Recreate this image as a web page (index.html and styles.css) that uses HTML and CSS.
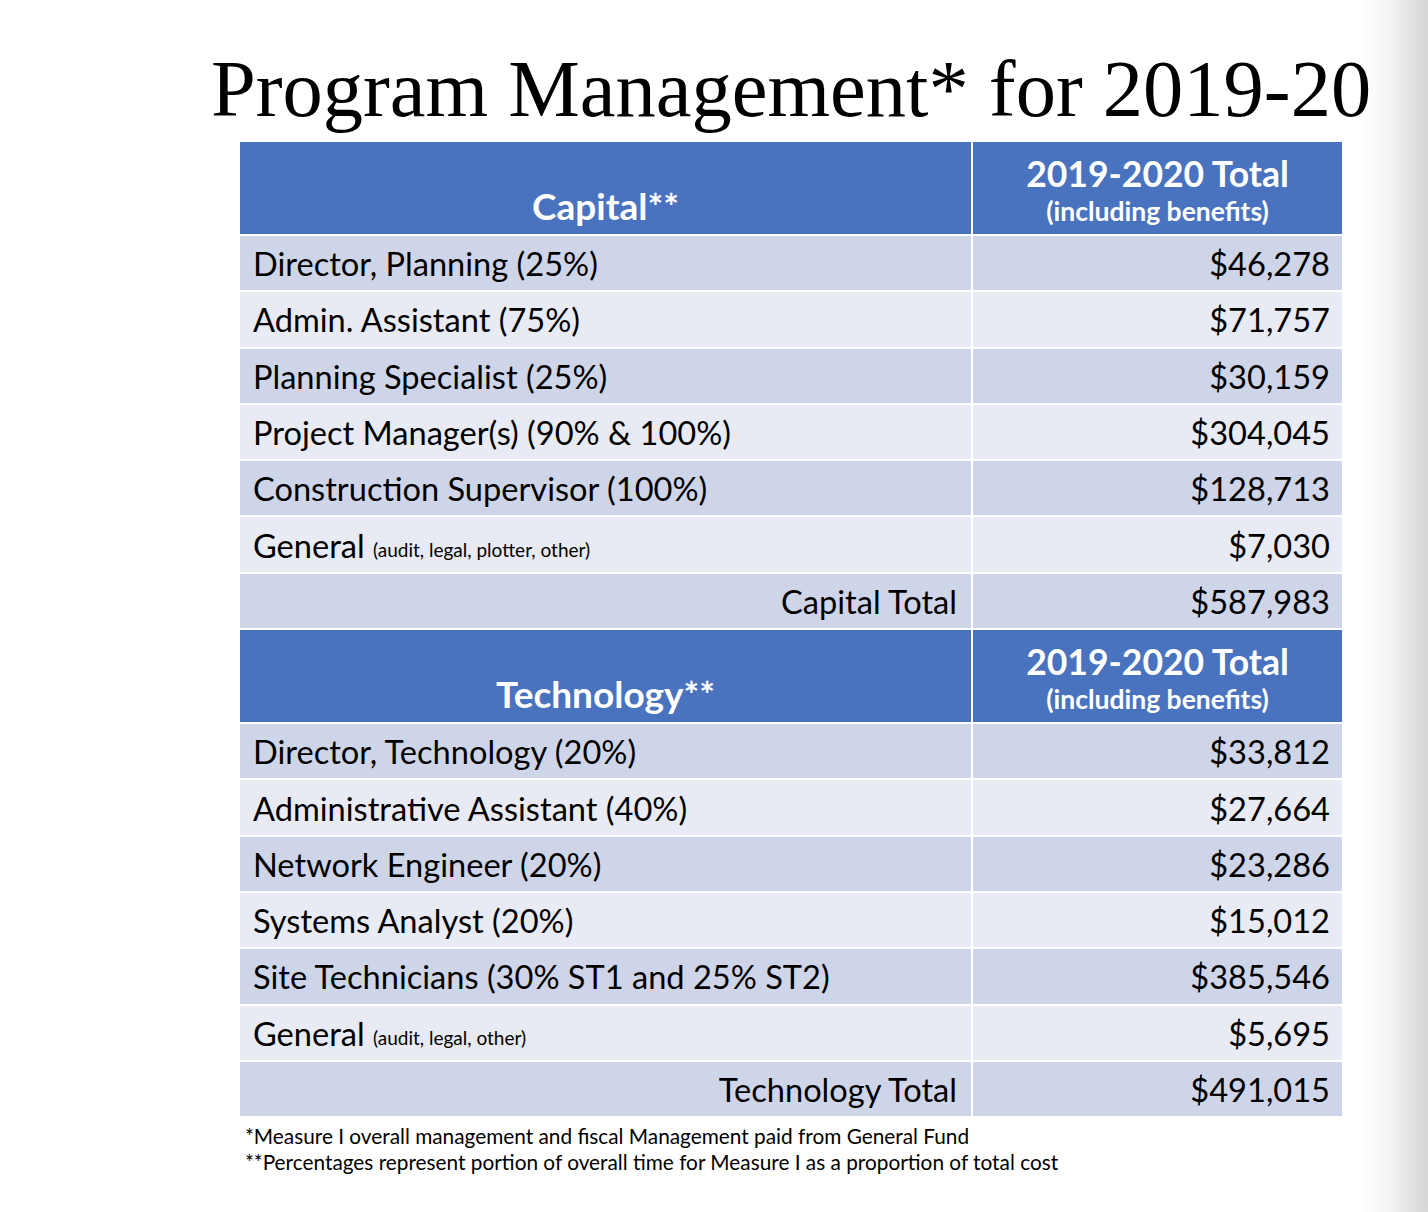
FILE: index.html
```
<!DOCTYPE html>
<html lang="en">
<head>
<meta charset="utf-8">
<title>Program Management for 2019-20</title>
<link rel="stylesheet" href="styles.css">
</head>
<body>
<main class="slide">
  <h1 class="title">Program Management* for 2019-20</h1>
  <div class="table">
    <div class="hd hd-left">Capital**</div>
    <div class="hd hd-right"><span class="hd-big">2019-2020 Total</span><span class="hd-small">(including benefits)</span></div>

    <div class="c dark">Director, Planning (25%)</div><div class="c dark num">$46,278</div>
    <div class="c light">Admin. Assistant (75%)</div><div class="c light num">$71,757</div>
    <div class="c dark">Planning Specialist (25%)</div><div class="c dark num">$30,159</div>
    <div class="c light">Project Manager(s) (90% &amp; 100%)</div><div class="c light num">$304,045</div>
    <div class="c dark">Construction Supervisor (100%)</div><div class="c dark num">$128,713</div>
    <div class="c light">General&nbsp;<span class="note">(audit, legal, plotter, other)</span></div><div class="c light num">$7,030</div>
    <div class="c dark total">Capital Total</div><div class="c dark num">$587,983</div>

    <div class="hd hd-left">Technology**</div>
    <div class="hd hd-right"><span class="hd-big">2019-2020 Total</span><span class="hd-small">(including benefits)</span></div>

    <div class="c dark">Director, Technology (20%)</div><div class="c dark num">$33,812</div>
    <div class="c light">Administrative Assistant (40%)</div><div class="c light num">$27,664</div>
    <div class="c dark">Network Engineer (20%)</div><div class="c dark num">$23,286</div>
    <div class="c light">Systems Analyst (20%)</div><div class="c light num">$15,012</div>
    <div class="c dark">Site Technicians (30% ST1 and 25% ST2)</div><div class="c dark num">$385,546</div>
    <div class="c light">General&nbsp;<span class="note">(audit, legal, other)</span></div><div class="c light num">$5,695</div>
    <div class="c dark total">Technology Total</div><div class="c dark num">$491,015</div>
  </div>
  <div class="foot">
    <p>*Measure I overall management and fiscal Management paid from General Fund</p>
    <p>**Percentages represent portion of overall time for Measure I as a proportion of total cost</p>
  </div>
</main>
</body>
</html>
```
FILE: styles.css
```
html, body {
  margin: 0;
  padding: 0;
}
body {
  width: 1428px;
  height: 1212px;
  overflow: hidden;
  background: linear-gradient(to right, #ffffff 0, #ffffff 1362px, #f3f3f3 1390px, #e2e2e2 1412px, #d6d6d6 1428px);
  font-family: "Lato", "Open Sans", sans-serif;
  color: #000;
}
.slide {
  width: 1102px;
  margin-left: 240px;
  padding-top: 48px;
}
.title {
  margin: 0;
  display: flex;
  justify-content: center;
  white-space: nowrap;
  font-family: "Liberation Serif", "Times New Roman", serif;
  font-weight: normal;
  font-size: 80.5px;
  line-height: 82px;
  height: 82px;
}
.table {
  margin-top: 12px;
  display: grid;
  grid-template-columns: 731px 369px;
  column-gap: 2px;
  row-gap: 2px;
  background: #ffffff;
}
.hd {
  background: #4a73bf;
  color: #fff;
  font-weight: bold;
  height: 92px;
  box-sizing: border-box;
}
.hd-left {
  display: flex;
  justify-content: center;
  align-items: flex-end;
  font-size: 37px;
  padding-bottom: 7px;
  line-height: 42px;
}
.hd-right {
  display: flex;
  flex-direction: column;
  align-items: center;
  padding-top: 12px;
}
.hd-big {
  font-size: 35.5px;
  line-height: 40px;
}
.hd-small {
  font-size: 26.5px;
  line-height: 34px;
}
.c {
  height: 54.3px;
  box-sizing: border-box;
  display: flex;
  align-items: center;
  padding: 1px 13px 0 13px;
  font-size: 32.6px;
  white-space: nowrap;
}
.dark { background: #cfd5e8; }
.light { background: #e8eaf4; }
.num, .total {
  justify-content: flex-end;
}
.total { padding-right: 14px; }
.num { padding-right: 12px; }
.note {
  font-size: 19px;
  position: relative;
  top: 4px;
}
.foot {
  margin-top: 7px;
  padding-left: 5px;
  font-size: 20.8px;
  line-height: 26px;
}
.foot p { margin: 0; }
```
